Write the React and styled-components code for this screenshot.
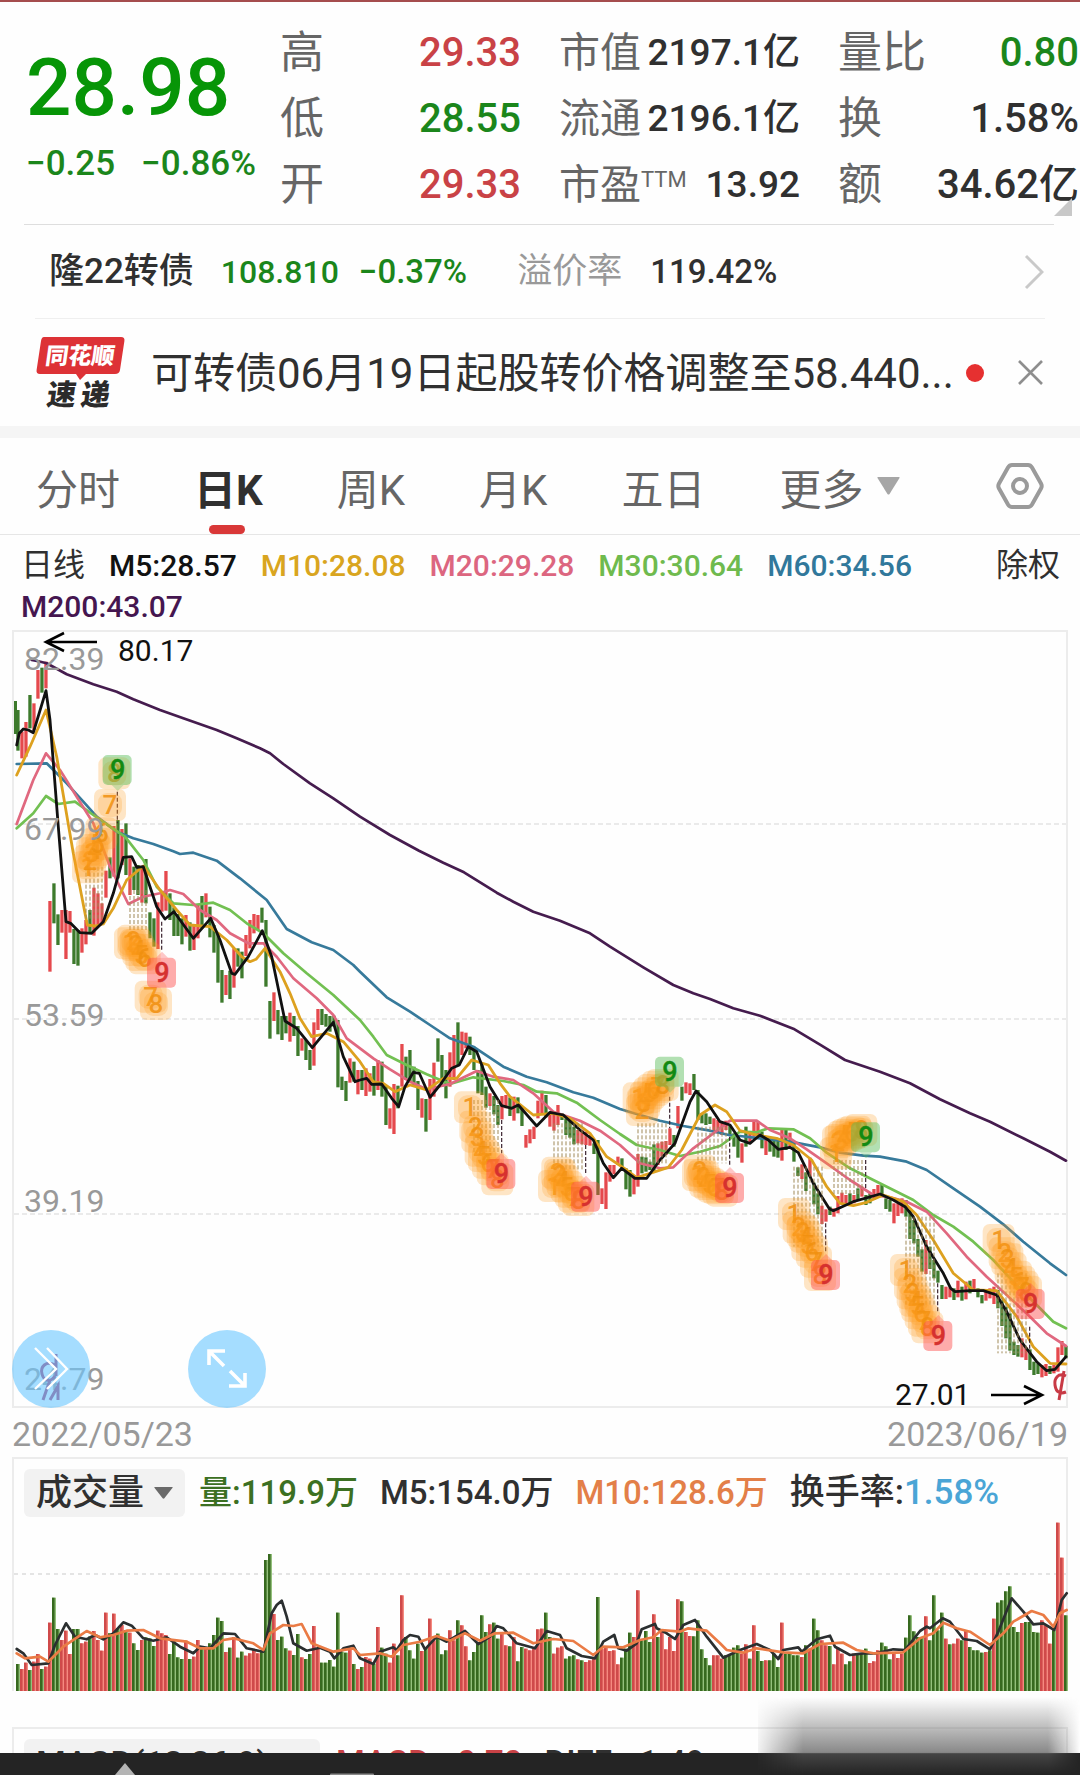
import React from "react";
import styled, { createGlobalStyle } from "styled-components";

const RED = "#c94246";
const GREEN = "#1b861b";
const INK = "#303030";
const UP = "#e5494d";
const DOWN = "#3d7a2c";

const GlobalStyle = createGlobalStyle`
  * { box-sizing: border-box; }
  body { margin: 0; background: #fefefe; }
  button { border: 0; padding: 0; margin: 0; background: none; font: inherit; color: inherit; cursor: pointer; }
  h1, p { margin: 0; font-weight: inherit; }
  a { color: inherit; text-decoration: none; }
`;

const Page = styled.main`
  height: 100vh;
  overflow: hidden;
  background: #fefefe;
  border-top: 2px solid #a54d4e;
  color: ${INK};
  font-family: Roboto, "Noto Sans CJK SC", sans-serif;
`;

/* ---------- quote header ---------- */
const Quote = styled.header`
  display: flex;
  position: relative;
  padding: 18px 1px 6px 26px;
`;
const PriceBox = styled.div`
  width: 254px;
  flex: none;
  padding-top: 28px;
  color: #079507;
`;
const Price = styled.h1`
  font-size: 80px;
  line-height: 80px;
  font-weight: 500;
`;
const Changes = styled.p`
  display: flex;
  gap: 26px;
  margin-top: 16px;
  font-size: 35px;
  line-height: 40px;
  font-weight: 500;
  color: ${GREEN};
`;
const Stats = styled.dl`
  flex: 1;
  margin: 0;
  display: grid;
  grid-template-columns: repeat(3, 1fr);
  column-gap: 38px;
`;
const Stat = styled.div`
  display: flex;
  justify-content: space-between;
  align-items: center;
  height: 66px;
  white-space: nowrap;
`;
const StatLabel = styled.dt`
  font-size: ${(p) => (p.$small ? 41 : 44)}px;
  line-height: 60px;
  color: #666;
  sup {
    font-size: 22px;
    line-height: 22px;
    vertical-align: 12px;
  }
`;
const StatValue = styled.dd`
  margin: 0;
  font-size: ${(p) => (p.$small ? 37 : 40)}px;
  line-height: 60px;
  font-weight: 500;
  color: ${(p) => p.$color || INK};
`;
const Corner = styled.svg`
  position: absolute;
  right: 8px;
  bottom: 8px;
`;
const Divider = styled.hr`
  border: 0;
  height: 1px;
  margin: 0 ${(p) => p.$right}px 0 ${(p) => p.$left}px;
  background: ${(p) => p.$color};
`;

/* ---------- bond + news ---------- */
const BondRow = styled.a`
  display: flex;
  align-items: center;
  height: 93px;
  padding: 0 36px 0 49px;
  line-height: 48px;
  font-weight: 500;
  white-space: nowrap;
`;
const BondName = styled.span`
  font-size: 35px;
  margin-right: 27px;
`;
const BondValue = styled.span`
  font-size: ${(p) => (p.$small ? 32 : 33)}px;
  color: ${(p) => p.$color || INK};
  margin-right: ${(p) => p.$gap || 0}px;
`;
const BondLabel = styled.span`
  font-size: 35px;
  font-weight: 400;
  color: #999;
  margin-right: 28px;
`;
const Spacer = styled.span`
  flex: 1;
`;
const NewsRow = styled.section`
  display: flex;
  align-items: center;
  height: 107px;
  padding: 0 37px 0 36px;
`;
const NewsTitle = styled.a`
  margin-left: 25px;
  padding-top: 3px;
  font-size: 42px;
  line-height: 60px;
  white-space: nowrap;
`;
const Dot = styled.span`
  flex: none;
  width: 18px;
  height: 18px;
  border-radius: 50%;
  margin-left: 12px;
  background: #e63030;
`;
const Band = styled.div`
  height: 12px;
  background: #f5f5f5;
`;

/* ---------- tabs ---------- */
const Tabs = styled.nav`
  display: flex;
  height: 97px;
  padding: 0 36px;
  border-bottom: 1px solid #e6e6e6;
  gap: 74px;
`;
const Tab = styled.button`
  display: flex;
  align-items: center;
  position: relative;
  gap: 14px;
  font-size: 42px;
  white-space: nowrap;
  color: ${(p) => (p.$active ? INK : "#666")};
  font-weight: ${(p) => (p.$active ? 700 : 400)};
  &::after {
    content: "";
    display: ${(p) => (p.$active ? "block" : "none")};
    position: absolute;
    left: 50%;
    bottom: 0;
    width: 36px;
    height: 9px;
    margin-left: -19px;
    border-radius: 5px;
    background: #d93838;
  }
`;
const SettingsButton = styled.button`
  margin-left: auto;
  display: flex;
  align-items: center;
`;

/* ---------- legend ---------- */
const Legend = styled.div`
  display: flex;
  align-items: flex-start;
  justify-content: space-between;
  padding: 10px 20px 3px 21px;
  font-size: 30px;
  line-height: 41px;
  font-weight: 500;
`;
const LegendItems = styled.div`
  display: flex;
  flex-wrap: wrap;
  column-gap: 24px;
`;
const LegendItem = styled.span`
  color: ${(p) => p.$color};
`;
const LegendText = styled.span`
  font-size: 32px;
  font-weight: 400;
`;
const TextButton = styled.button`
  font-size: 32px;
  line-height: 41px;
  font-weight: 400;
  white-space: nowrap;
`;

/* ---------- charts ---------- */
const ChartPane = styled.section`
  position: relative;
  margin: 0 12px;
  border: 2px solid #ececec;
`;
const ChartSvg = styled.svg`
  display: block;
  width: 100%;
  height: auto;
  overflow: visible;
`;
const RoundButton = styled.button`
  position: absolute;
  left: ${(p) => p.$left};
  bottom: -2px;
  width: 78px;
  height: 78px;
  border-radius: 50%;
  background: rgba(110, 200, 255, 0.62);
  display: grid;
  place-items: center;
`;
const Dates = styled.div`
  display: flex;
  justify-content: space-between;
  align-items: center;
  height: 49px;
  padding: 2px 12px 0;
  font-size: 34px;
  color: #999;
`;
const Panel = styled.section`
  margin: 0 12px ${(p) => p.$gap || 0}px;
  border: 2px solid #ececec;
  border-bottom: 0;
`;
const PanelHead = styled.div`
  display: flex;
  align-items: center;
  gap: 22px;
  padding: 10px 10px 0;
  font-size: 33px;
  font-weight: 500;
  line-height: 48px;
  white-space: nowrap;
`;
const Picker = styled.button`
  display: flex;
  align-items: center;
  justify-content: space-between;
  gap: 10px;
  height: 48px;
  padding: 0 12px;
  margin-right: -8px;
  border-radius: 6px;
  background: #f2f2f2;
  font-size: 36px;
`;
const PickerWide = styled(Picker)`
  width: 296px;
  font-size: 34px;
  margin-right: -6px;
`;
const Metric = styled.span`
  color: ${(p) => p.$color || INK};
`;
const Turnover = styled.span`
  font-size: 35px;
`;
const BottomBar = styled.footer`
  position: fixed;
  left: 0;
  right: 0;
  bottom: 0;
  height: 22px;
  background: #242424;
  display: flex;
  align-items: flex-end;
  svg { display: block; }
`;
const Smudge = styled.div`
  position: fixed;
  right: 0;
  bottom: 0;
  width: 322px;
  height: 78px;
  background: linear-gradient(to bottom, rgba(120, 120, 120, 0), rgba(120, 120, 120, 0.88) 71%, rgba(72, 72, 72, 0.9) 73%, rgba(36, 36, 36, 0.9));
  mask-image: linear-gradient(to right, rgba(0, 0, 0, 0.1), #000 14%, #000 90%, transparent);
`;

/* ---------- data ---------- */
/* Drawing coordinates are stored in thirds of a unit, relative to a segment origin. */
const A = [0, -10];
const B = [200, 230];
const C = [360, 250];
const D = [740, 430];

const CANDLES = [
  [0, -10, "g270-392 r335-415 r306-410 g225-325 r250-330 r150-236 g143-218 r125-205 r843-1055 g790-910 g883-975 r870-938 r870-1017 r873-938 g927-1032 g930-1037 r925-998 r900-973 g870-940 r803-947 r820-920 r850-915 r752-833 g712-775 r618-770 g600-775 r627-735 g610-765 r715-825 g740-810 g735-825 r740-848 g717-850 g877-955 g895-980 r847-987 r820-875 r753-872 g820-900 g862-948 g882-948 g895-973 r885-950 g907-992 r912-990 r855-955 g828-925 r820-892 g860-952 g915-998 g940-1088 g1050-1148 r1065-1125 g1052-1137 r985-1103 g985-1040 g995-1075 r945-1008 r900-985 r882-940 r885-930 g863-908 g900-1100"],
  [63, 230, "g423-536 r397-483 g450-523 g468-540 g468-520 r458-545 g468-528 g498-588 r535-572 g540-600 g570-630 r487-617 r447-510 g447-495 g462-500 g468-515 g467-500 g480-682 g650-690 g663-723 r595-668 g605-665 r630-703 g630-690 r625-708 r640-695 g618-707 r600-690 g605-710 g675-795 r745-806 r672-822 g677-745 r552-680"],
  [97, 250, "g530-600 g510-605 g560-620 g603-690 r655-713 g657-755 r597-720 r548-650 g475-545 g525-620 g570-655 r517-620 r465-600 g427-555 r455-525 r458-505 g470-525 g500-570 g570-640 g555-645 g620-683 r640-678 g648-703 g675-735 r648-718 r645-685 g652-708 r650-722 g652-700 g680-738 r765-803 r748-790 r740-777 r662-715 r632-705 g645-712 r700-740 r700-752 r675-735 g700-720 g715-765 g720-773 g740-793 r750-790 r750-793 r755-795 r765-797 g790-822 g780-945 r925-972 r877-987 r855-905 r855-883 r830-855 g835-870 g865-928 g870-950 r890-943 r822-920 g830-880 g832-875 g845-870 g793-875 r790-855 r785-830 r783-825 r745-795 g765-800 r678-745 g620-662 r607-640 r610-645 g582-630 g630-720 g700-730 g700-735 g710-732 r715-755 r720-760 r725-765 r722-750 g738-765 g760-800 g770-833"],
  [181, 430, "r250-308 g200-260 r215-250 r180-230 r183-225 g215-265 r232-285 g235-275 g240-290 g235-293 r207-302 g210-270 r218-262 g245-305 g322-348 r313-357 g337-393 r293-350 g368-433 g400-463 r437-492 r448-485 g440-465 r445-470 r408-460 r398-430 r405-430 g400-432 r405-430 g385-420 r380-410 g405-435 g400-430 r387-420 r375-412 g372-408 g415-447 g420-455 r430-490 r430-468 r415-460 g420-470 g450-537 g480-550 g537-590 g568-635 r540-642 g560-627 g600-655 g632-668 g675-717 r680-717 r682-712 g685-720 r662-712 g680-722 r665-718 g662-700 r657-690 g685-712 g705-730 r695-722 r685-715 r680-732 g690-745 g720-798 g740-835 g760-872 g845-885 g855-890 r835-892 r862-900 g868-930 g905-945 g910-942 r915-952 r912-948 g918-942 r915-940 r862-935 r843-885 g858-895"],
];

const PRICE_LINES = [
  { color: "#451c4e", width: 2.7, parts: [
    [A, "95,120 115,124 140,130 200,163 280,193 350,215 400,238 480,270 550,295 650,330 710,355 780,385 810,400 850,432 930,490 1000,535 1080,590 1170,645 1257,692 1330,728 1392,757"],
    [C, "410,38 460,65 520,95 600,122 690,160 750,200 850,262 940,315 1000,340 1050,357 1120,385 1200,407"],
    [D, "160,-94 240,-46 315,0 420,35 510,70 600,118 690,160 750,185 850,235 930,275 978,302"]] },
  { color: "#377a9b", width: 2.7, parts: [
    [A, "50,432 140,430 200,490 250,545 290,590 350,635 400,655 460,672 520,694 540,702 580,698 650,722 720,775 800,840"],
    [B, "260,207 335,247 400,270 460,315"],
    [C, "0,275 80,352 150,395 210,435 270,475 340,500 430,560 500,590 560,607 640,637 700,653 780,687 840,705 900,722 970,738 1050,752 1120,768"],
    [D, "0,228 60,235 150,245 240,262 300,278 370,287 420,290 500,305 560,330 640,385 720,440 790,493 850,545 930,610 978,645"]] },
  { color: "#72c052", width: 2.7, parts: [
    [A, "50,625 100,580 138,528 175,552 225,545 280,585 330,620 375,650 430,720 470,800 520,850 580,855 640,848 690,870 740,910 790,940"],
    [B, "250,280 320,340 400,405"],
    [C, "0,420 40,470 80,525 140,555 200,583 270,612 340,592 430,603 490,615 530,635 590,640 650,668 720,720 780,762 830,795 900,810 960,828 1020,815 1080,798"],
    [D, "0,215 50,217 85,205 160,208 210,235 260,278 330,325 400,360 460,390 520,420 580,465 640,500 700,545 760,600 820,665 900,745 940,785 978,805"]] },
  { color: "#e0687f", width: 2.7, parts: [
    [A, "50,612 100,480 138,400 180,450 230,530 280,610 330,740 385,852 430,830 480,820 510,810 550,822 600,870 650,900 690,940 745,970 790,970"],
    [B, "230,290 280,355 350,415 400,465 440,535"],
    [C, "40,535 90,568 150,605 200,628 270,612 350,573 400,590 460,600 520,640 580,695 660,722 720,752 780,795 840,850 900,865 940,862 1000,805 1060,760 1110,722"],
    [D, "0,182 50,182 90,210 150,235 200,268 260,310 330,360 400,405 450,412 500,425 560,455 620,520 680,590 740,650 800,705 870,770 920,820 978,858"]] },
  { color: "#dda11f", width: 2.8, parts: [
    [A, "50,465 90,380 138,270 170,410 220,700 262,915 285,918 310,912 340,865 380,780 430,738 480,810 530,870 570,915 630,920 680,960 725,1010 750,1025 768,1018 795,985"],
    [B, "240,335 270,400 300,475 335,530 380,520 430,545"],
    [C, "0,545 40,605 70,610 105,635 150,615 200,630 250,595 290,595 335,540 385,555 420,610 450,650 520,705 580,700 630,715 690,760 740,830 800,870 830,893 870,880 925,862 965,810 1020,705 1065,675 1100,695"],
    [D, "0,212 50,225 110,235 160,255 215,300 260,380 300,430 340,437 380,427 430,405 490,425 530,465 580,540 640,640 700,690 770,692 830,770 880,860 930,910 978,912"]] },
  { color: "#111", width: 2.8, parts: [
    [A, "50,375 58,340 70,327 85,330 100,338 138,212 150,300 175,620 198,905 212,910 240,938 275,940 310,905 340,820 370,712 395,710 410,742 430,740 470,860 495,897 522,875 580,955 632,895 660,960 695,1060 705,1063 745,1010 787,932"],
    [B, "215,290 255,483 290,505 337,563 400,487 430,590 465,665"],
    [C, "0,600 20,595 35,613 65,612 95,655 116,680 135,620 160,577 178,580 210,652 240,615 275,565 298,555 325,500 350,515 390,620 425,677 455,685 475,675 530,738 570,697 610,705 660,750 700,780 730,850 760,893 785,865 825,895 860,895 900,840 945,790 990,665 1008,633 1040,665 1080,725 1110,735"],
    [D, "0,240 30,250 60,225 85,240 115,268 150,262 175,278 220,370 268,446 280,452 340,425 420,402 460,420 495,440 520,470 560,560 610,640 632,685 645,695 690,692 730,692 770,705 800,755 840,840 890,905 920,932 945,928 978,890"]] },
];

/* Countdown marks 1-8 leading up to the closing 9. */
const SIGNALS = [
  { seg: A, kind: "g", nine: [353, 450], dashX: 258, dashTop: 740, dashBottom: 900, n: 5, lead: [352, 515, 610], steps: [[264, 742], [270, 722], [276, 700], [284, 690], [292, 672], [304, 640], [330, 555], [343, 460]] },
  { seg: A, kind: "r", nine: [486, 1058], dashX: 390, dashTop: 810, dashBottom: 930, n: 5, lead: [485, 905, 990], steps: [[390, 970], [400, 962], [408, 975], [415, 990], [424, 1005], [434, 1015], [452, 1130], [468, 1152]] },
  { seg: C, kind: "r", nine: [424, 882], dashX: 342, dashTop: 660, dashBottom: 820, n: 7, lead: [425, 720, 820], steps: [[330, 682], [346, 740], [352, 770], [362, 812], [372, 828], [384, 848], [398, 868], [412, 898]] },
  { seg: C, kind: "r", nine: [678, 950], dashX: 582, dashTop: 730, dashBottom: 870, n: 8, lead: [677, 795, 880], steps: [[582, 918], [592, 878], [600, 885], [608, 902], [620, 920], [632, 935], [642, 950], [655, 960]] },
  { seg: C, kind: "g", nine: [930, 575], dashX: 834, dashTop: 730, dashBottom: 850, n: 8, lead: [929, 650, 745], steps: [[836, 655], [846, 690], [852, 670], [858, 652], [868, 640], [880, 630], [894, 620], [908, 615]] },
  { seg: C, kind: "r", nine: [1110, 924], dashX: 1014, dashTop: 740, dashBottom: 850, n: 8, lead: [1109, 770, 855], steps: [[1014, 885], [1020, 872], [1030, 890], [1036, 905], [1048, 912], [1060, 920], [1074, 925], [1086, 932]] },
  { seg: D, kind: "g", nine: [378, 232], dashX: 282, dashTop: 300, dashBottom: 405, n: 8, lead: [377, 300, 385], steps: [[288, 280], [294, 245], [302, 240], [312, 230], [322, 225], [334, 220], [346, 215], [364, 210]] },
  { seg: D, kind: "r", nine: [258, 645], dashX: 162, dashTop: 320, dashBottom: 560, n: 8, lead: [257, 490, 575], steps: [[162, 462], [176, 502], [188, 515], [196, 530], [202, 555], [216, 575], [228, 605], [240, 645]] },
  { seg: D, kind: "r", nine: [595, 828], dashX: 498, dashTop: 470, dashBottom: 740, n: 8, lead: [593, 670, 760], steps: [[498, 630], [510, 672], [518, 700], [526, 722], [532, 738], [542, 760], [552, 782], [562, 802]] },
  { seg: D, kind: "r", nine: [872, 732], dashX: 774, dashTop: 640, dashBottom: 880, n: 8, lead: [869, 800, 880], steps: [[776, 540], [794, 580], [802, 598], [812, 625], [828, 650], [838, 665], [848, 680], [858, 695]] },
];

const VOLUMES = [
  [0, 1173, "g1092 r1107 r1088 g1110 r1085 r1062 g1107 r1100 r968 g893 g987 r1020 r992 r1062 g987 g987 r1030 r1025 g1010 r993 r1020 r1052 r938 g1000 r941 g985 r975 g990 r998 g1030 g1050 r1020 g1012 g1015 g1038 r992 r1000 r1005 g1062 g1020 g1072 g1077 r1022 g1077 r1070 r1020 g1040 r1042 g1030 g1005 g953 g963 r1056 g1043 r1012 g1073 g1055 r1067 r1060 r1050 r1060 g1050 g780 g762 r942 g1020 g1010 g1045 r1052 g1065 g1002 r1072 g1077 g1062 r978 r1045 g1088 g1088 g1080 g1100 g938 g1055 g1058 r1045 g1092 r1107"],
  [86, 752, "g680 r650 r655 g670 r560 g622 g640 r667 r610 g645 r465 g590 g630 g655 g610 r632 g620 r535 r600 g580 g642 g630 r570 r600 g540 r555 r618 g660 g635 g605 g525 g575 r552 g547 g595 r580 r615 g618 r590 g663 g620 r625 r630 r625 r567 r565 g517 g590 r640 r622 r618 g655 g648 g645 r657 g660 r665 r660 r650 g470 r625 r620 r632 r630 r672 g652 g625 g577 r590 r450 g600 g572 g605 r522 g590 r570 r627 r590 r632 r477 g483 r575 r587 g588 g540 g627 g653 g675 r645 r645 r655 g645 g643 g622 g615 r640 r612 g655 r555 g632 g662 r660 g660 g640 g680 r547 g640 g640 g645 g645 r650 g615 r625 g535 g570 r600 r615 g617 r672 r622 r640 g672 g663 r640 g640 g640 g625 r668 r663 r630 g607 g618 g657 r640 r653 r640 g592 g525 g573 g590 g590 r528 g600 g465 g570 g517 r595 g612 r610 r595 g600 r570 g620 g630 g630 g637 r635 g630 r535 g487 g480 g453 g438 g560 g575 r548 g545 g545 g575 g577 r540 r555 r610 g570 r247 r352 g525"],
];
const VA = [0, -217];
const VB = [360, -77];
const VC = [720, -77];
const VOLUME_LINES = [
  { color: "#2b2f30", parts: [
    [VA, "50,1047 70,1060 95,1095 145,1090 165,1035 198,970 225,1010 260,1018 285,1005 310,1018 340,1000 370,967 395,977 430,1015 460,1022 500,1012 540,1040 580,1060 600,1040 630,1045 670,1000 705,1002 740,1045 790,1055 815,940 830,915 845,902 860,950 880,1030 920,1052 960,1043 990,1055 1003,1075 1030,1045 1060,1037"],
    [VB, "0,655 40,672 60,635 100,622 110,630 130,600 150,585 175,590 195,628 230,590 260,605 315,573 355,612 390,590 410,558 430,565 470,610 525,625 560,573 600,585 620,625 665,648 705,655 730,605 763,585 775,625 800,632 830,610 845,568 885,552 890,565 920,580 945,597 970,555 1005,540 1040,590"],
    [VC, "10,653 60,630 110,612 150,630 175,657 190,630 235,622 245,635 290,598 330,587 345,620 390,645 430,640 470,640 520,628 555,630 600,573 620,560 630,565 668,535 690,545 730,597 770,603 810,628 835,575 875,475 910,515 940,553 970,550 1003,570 1025,480 1040,460"]] },
  { color: "#ea7b45", parts: [
    [VA, "50,1060 75,1075 120,1070 145,1085 190,1040 235,1010 260,993 300,1012 340,1005 380,992 430,990 480,1015 560,1025 600,1045 640,1045 670,1020 700,1015 760,1030 790,1050 810,1000 850,975 880,978 905,972 935,1030 1000,1055 1060,1045"],
    [VB, "0,645 60,640 95,650 130,615 180,605 230,588 270,602 315,580 360,602 405,580 460,578 520,610 580,597 640,603 700,645 730,620 790,622 840,600 880,592 905,570 960,575 985,565 1040,572"],
    [VC, "0,610 20,630 70,638 110,625 190,637 250,640 300,612 370,608 410,630 460,640 550,637 600,595 640,580 670,548 710,565 750,575 810,615 850,580 880,545 935,513 970,525 1000,560 1020,520 1040,510"]] },
];

const at = ([ox, oy], x, y) => [ox + x / 3, oy + y / 3];
const linePoints = (parts) =>
  parts
    .flatMap(([seg, text]) => text.split(" ").map((pair) => at(seg, ...pair.split(",").map(Number))))
    .map(([x, y]) => `${x.toFixed(1)},${y.toFixed(1)}`)
    .join(" ");
const candleX = (i) => 18 + 4 * i;
const candles = CANDLES.flatMap(([start, base, text]) =>
  text.split(" ").map((t, k) => {
    const [top, bottom] = t.slice(1).split("-").map(Number);
    return { x: candleX(start + k), up: t[0] === "r", top: base + top / 3, height: (bottom - top) / 3 };
  })
);
const volumes = VOLUMES.flatMap(([start, base, text]) =>
  text.split(" ").map((t, k) => ({
    x: candleX(start + k),
    up: t[0] === "r",
    height: (base - Number(t.slice(1))) / 3,
  }))
);

function Signal({ seg, kind, nine, dashX, dashTop, dashBottom, n, lead, steps }) {
  const [nx, ny] = at(seg, ...nine);
  const [lx, ly] = at(seg, lead[0], lead[1]);
  const ink = kind === "g" ? "#128a12" : "#d6312f";
  return (
    <g>
      {Array.from({ length: n }, (_, k) => {
        const [x, y] = at(seg, dashX + k * 12, dashTop);
        return <line key={k} x1={x} x2={x} y1={y} y2={y + (dashBottom - dashTop) / 3} stroke="#a08a58" strokeWidth="1" strokeDasharray="4 2" />;
      })}
      <line x1={lx} x2={lx} y1={ly} y2={ly + (lead[2] - lead[1]) / 3} stroke="#3b2430" strokeWidth="1.2" strokeDasharray="4 2" />
      {steps.map(([sx, sy], k) => {
        const [x, y] = at(seg, sx, sy);
        return (
          <g key={k}>
            <rect x={x - 16} y={y - 16} width="32" height="32" rx="7" fill="#ffa024" fillOpacity="0.26" />
            <rect x={x - 12} y={y - 12} width="24" height="24" rx="9" fill="#ff9a1c" fillOpacity="0.22" />
            <text x={x} y={y + 9} fontSize="26" fontWeight="500" textAnchor="middle" fill="#f0900f" fillOpacity="0.85">{k + 1}</text>
          </g>
        );
      })}
      <path
        d={kind === "g" ? `M${nx - 6} ${ny + 15}h12l-6 6z` : `M${nx - 6} ${ny - 15}h12l-6 -6z`}
        fill={kind === "g" ? "#57bd57" : "#ff4a48"}
        fillOpacity="0.3"
      />
      <rect x={nx - 15} y={ny - 15} width="29" height="30" rx="5" fill={kind === "g" ? "#57bd57" : "#ff4a48"} fillOpacity="0.45" />
      <text x={nx} y={ny + 9} fontSize="27" fontWeight="500" textAnchor="middle" fill={ink} stroke={ink} strokeWidth="0.4">9</text>
    </g>
  );
}

const GRID = [824, 1019, 1214].map((y) => y - 630);

function PriceChart() {
  return (
    <ChartSvg viewBox="14 2 1052 774" role="img" aria-label="日K线图">
      {GRID.map((y) => (
        <line key={y} x1="14" x2="1066" y1={y} y2={y} stroke="#e4e4e4" strokeWidth="1.4" strokeDasharray="5 3" />
      ))}
      <rect x="14" y="71" width="3" height="33" fill={DOWN} />
      {candles.map((c) => (
        <rect key={c.x} x={c.x - 1.7} y={c.top} width="3.3" height={c.height} fill={c.up ? UP : DOWN} />
      ))}
      {PRICE_LINES.map((l) => (
        <polyline key={l.color} points={linePoints(l.parts)} fill="none" stroke={l.color} strokeWidth={l.width} strokeLinejoin="round" strokeLinecap="round" />
      ))}
      {SIGNALS.map((s) => (
        <Signal key={`${s.seg[0]}-${s.nine[0]}`} {...s} />
      ))}
      <g fontSize="32" fill="#999">
        <text x="24" y="40">82.39</text>
        <text x="24" y="210">67.99</text>
        <text x="24" y="396">53.59</text>
        <text x="24" y="582">39.19</text>
        <text x="24" y="760">24.79</text>
      </g>
      <g fill="none" stroke="#000" strokeWidth="2.6">
        <path d="M97 12H47M64 3L46 12L64 21" />
        <path d="M991 765H1041M1024 756L1042 765L1024 774" />
      </g>
      <g fontSize="30" fill="#111">
        <text x="118" y="31">80.17</text>
        <text x="895" y="775">27.01</text>
      </g>
      <g fill="none" strokeWidth="3">
        <path d="M1066 746c-8-4-12 3-11 9c1 8 6 9 11 7M1064 741L1059 770" stroke="#c83a45" />
        <path d="M55 735c-9-5-15 2-13 9c2 8 9 8 13 2M50 750L43 770M56 724V746M50 770L58 756V770" stroke="#a02f68" />
      </g>
    </ChartSvg>
  );
}

function VolumeChart() {
  return (
    <ChartSvg viewBox="14 0 1052 174" role="img" aria-label="成交量">
      <line x1="14" x2="1066" y1="57" y2="57" stroke="#dcdcdc" strokeWidth="1.4" strokeDasharray="4 4" />
      {volumes.map((v) => (
        <React.Fragment key={v.x}>
          <rect x={v.x - 2} y={174 - v.height} width="4" height={v.height} fill={v.up ? "#f58a80" : "#94c07c"} />
          <rect x={v.x - 2} y={174 - v.height} width="2.6" height={v.height} fill={v.up ? "#cf4a4a" : "#37691f"} />
        </React.Fragment>
      ))}
      {VOLUME_LINES.map((l) => (
        <polyline key={l.color} points={linePoints(l.parts)} fill="none" stroke={l.color} strokeWidth="2.7" strokeLinejoin="round" strokeLinecap="round" />
      ))}
    </ChartSvg>
  );
}

const STATS = [
  { label: "高", value: "29.33", color: RED },
  { label: "市值", value: "2197.1亿", small: true },
  { label: "量比", value: "0.80", color: GREEN },
  { label: "低", value: "28.55", color: GREEN },
  { label: "流通", value: "2196.1亿", small: true },
  { label: "换", value: "1.58%" },
  { label: "开", value: "29.33", color: RED },
  { label: "市盈", sup: "TTM", value: "13.92", small: true },
  { label: "额", value: "34.62亿" },
];

const AVERAGES = [
  ["M5:28.57", "#111"],
  ["M10:28.08", "#d9a520"],
  ["M20:29.28", "#dc6680"],
  ["M30:30.64", "#6fba4e"],
  ["M60:34.56", "#31789b"],
  ["M200:43.07", "#451650"],
];

function Caret({ width, height, color }) {
  return (
    <svg width={width} height={height} viewBox="0 0 22 18" preserveAspectRatio="none" aria-hidden="true">
      <path d="M1 0H21Q22 0 21.500 1L12 17Q11 18 10 17L0.500 1Q0 0 1 0Z" fill={color} />
    </svg>
  );
}

const LogoSvg = styled.svg`
  flex: none;
  overflow: visible;
`;

function NewsLogo() {
  return (
    <LogoSvg width="90" height="74" viewBox="0 0 90 74" aria-label="同花顺速递">
      <path d="M8 1H85Q89 1 88.400 5L84 34Q83.400 38 79 38H50L44 44L40 38H4Q0 38 0.600 34L5 5Q5.600 1 8 1Z" fill="#dd3236" />
      <g transform="skewX(-8)" fontWeight="900" fontFamily="'Noto Sans CJK SC', sans-serif" textAnchor="middle">
        <text x="47" y="28" fontSize="23" fill="#fff">同花顺</text>
        <text x="34" y="69" fontSize="29" fill="#2b2b2b">速</text>
        <text x="68" y="69" fontSize="29" fill="#2b2b2b">递</text>
      </g>
    </LogoSvg>
  );
}

export default function App() {
  return (
    <Page>
      <GlobalStyle />
      <Quote>
        <PriceBox>
          <Price>28.98</Price>
          <Changes>
            <span>−0.25</span>
            <span>−0.86%</span>
          </Changes>
        </PriceBox>
        <Stats>
          {STATS.map((s) => (
            <Stat key={s.label}>
              <StatLabel $small={s.small}>
                {s.label}
                {s.sup && <sup>{s.sup}</sup>}
              </StatLabel>
              <StatValue $small={s.small} $color={s.color}>{s.value}</StatValue>
            </Stat>
          ))}
        </Stats>
        <Corner width="18" height="18" viewBox="0 0 18 18" aria-hidden="true">
          <path d="M18 0V18H0Z" fill="#c8c8c8" />
        </Corner>
      </Quote>
      <Divider $left={24} $right={26} $color="#dedede" />

      <BondRow href="#bond">
        <BondName>隆22转债</BondName>
        <BondValue $small $color={GREEN} $gap={20}>108.810</BondValue>
        <BondValue $color={GREEN} $gap={50}>−0.37%</BondValue>
        <BondLabel>溢价率</BondLabel>
        <BondValue>119.42%</BondValue>
        <Spacer />
        <svg width="20" height="36" viewBox="0 0 20 36" fill="none" aria-hidden="true">
          <path d="M2 2L18 18L2 34" stroke="#c9c9c9" strokeWidth="3" />
        </svg>
      </BondRow>
      <Divider $left={35} $right={35} $color="#efefef" />

      <NewsRow>
        <NewsLogo />
        <NewsTitle href="#news">可转债06月19日起股转价格调整至58.440...</NewsTitle>
        <Dot />
        <Spacer />
        <button aria-label="关闭">
          <svg width="25" height="25" viewBox="0 0 25 25" fill="none" display="block">
            <path d="M1 1L24 24M24 1L1 24" stroke="#8e8e8e" strokeWidth="2.600" />
          </svg>
        </button>
      </NewsRow>
      <Band />

      <Tabs>
        <Tab>分时</Tab>
        <Tab $active>日K</Tab>
        <Tab>周K</Tab>
        <Tab>月K</Tab>
        <Tab>五日</Tab>
        <Tab>
          更多
          <Caret width={23} height={18} color="#a6a6a6" />
        </Tab>
        <SettingsButton aria-label="设置">
          <svg width="48" height="48" viewBox="0 0 48 48" fill="none" stroke="#9a9a9a" strokeWidth="4">
            <path d="M16 3H32Q34.500 3 36 5.500L45 21.500Q46.400 24 45 26.500L36 42.500Q34.500 45 32 45H16Q13.500 45 12 42.500L3 26.500Q1.600 24 3 21.500L12 5.500Q13.500 3 16 3Z" />
            <circle cx="24" cy="24" r="7" />
          </svg>
        </SettingsButton>
      </Tabs>

      <Legend>
        <LegendItems>
          <LegendText>日线</LegendText>
          {AVERAGES.map(([text, color]) => (
            <LegendItem key={text} $color={color}>{text}</LegendItem>
          ))}
        </LegendItems>
        <TextButton>除权</TextButton>
      </Legend>

      <ChartPane>
        <PriceChart />
        <RoundButton $left="-2px" aria-label="展开">
          <svg width="40" height="46" viewBox="0 0 40 46" fill="none" stroke="#fff" strokeWidth="2.400">
            <path d="M4 2L25 23L4 43M16 2L36 23L16 43" />
          </svg>
        </RoundButton>
        <RoundButton $left="16.5%" aria-label="全屏">
          <svg width="42" height="42" viewBox="0 0 42 42" fill="none" stroke="#fff" strokeWidth="3.600">
            <path d="M3 17V3H19M4 4L18 18M39 25V38H23M38 37L24 23" />
          </svg>
        </RoundButton>
      </ChartPane>

      <Dates>
        <span>2022/05/23</span>
        <span>2023/06/19</span>
      </Dates>

      <Panel $gap={36}>
        <PanelHead>
          <Picker>
            成交量
            <Caret width={19} height={12} color="#6a6a6a" />
          </Picker>
          <Metric $color="#3c7022">量:119.9万</Metric>
          <Metric>M5:154.0万</Metric>
          <Metric $color="#e37f48">M10:128.6万</Metric>
          <Turnover>
            <Metric>换手率:</Metric>
            <Metric $color="#4aa5d6">1.58%</Metric>
          </Turnover>
        </PanelHead>
        <VolumeChart />
      </Panel>

      <Panel>
        <PanelHead>
          <PickerWide>
            MACD(12,26,9)
            <Caret width={19} height={12} color="#6a6a6a" />
          </PickerWide>
          <Metric $color={RED}>MACD:−0.70</Metric>
          <Metric>DIFF:−1.49</Metric>
        </PanelHead>
      </Panel>

      <BottomBar>
        <svg width="400" height="12" viewBox="0 0 400 12" aria-hidden="true">
          <path d="M125 0L135 12H115Z" fill="#b4b4b4" />
          <rect x="330" y="10.500" width="44" height="3" rx="1" fill="#8a8a8a" />
        </svg>
      </BottomBar>
      <Smudge />
    </Page>
  );
}
